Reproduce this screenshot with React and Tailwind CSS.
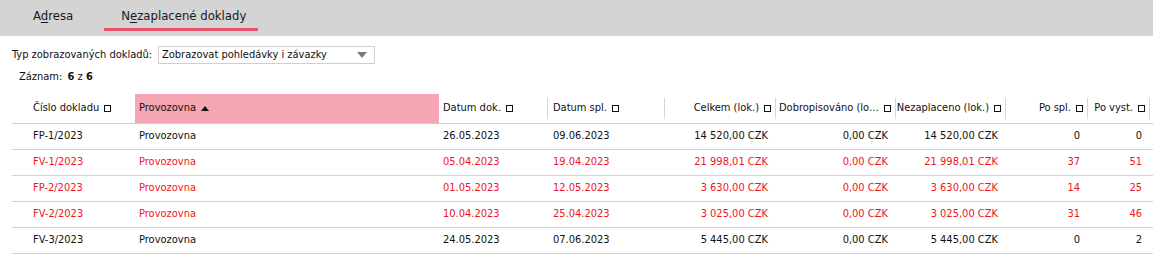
import React from "react";

const font = { fontFamily: '"DejaVu Sans Condensed", Tahoma, "Liberation Sans", sans-serif' };

const cols = [
  { label: "Číslo dokladu", w: 123, align: "left", pl: "pl-[21px]" },
  { label: "Provozovna", w: 304, align: "left", pl: "pl-[4px]", sorted: true },
  { label: "Datum dok.", w: 109, align: "left", pl: "pl-[4px]" },
  { label: "Datum spl.", w: 117, align: "left", pl: "pl-[5px]" },
  { label: "Celkem (lok.)", w: 111, align: "right" },
  { label: "Dobropisováno (lo…", w: 120, align: "right" },
  { label: "Nezaplaceno (lok.)", w: 110, align: "right" },
  { label: "Po spl.", w: 82, align: "right" },
  { label: "Po vyst.", w: 62, align: "right" },
];

const rows = [
  { red: false, d: ["FP-1/2023", "Provozovna", "26.05.2023", "09.06.2023", "14 520,00 CZK", "0,00 CZK", "14 520,00 CZK", "0", "0"] },
  { red: true, d: ["FV-1/2023", "Provozovna", "05.04.2023", "19.04.2023", "21 998,01 CZK", "0,00 CZK", "21 998,01 CZK", "37", "51"] },
  { red: true, d: ["FP-2/2023", "Provozovna", "01.05.2023", "12.05.2023", "3 630,00 CZK", "0,00 CZK", "3 630,00 CZK", "14", "25"] },
  { red: true, d: ["FV-2/2023", "Provozovna", "10.04.2023", "25.04.2023", "3 025,00 CZK", "0,00 CZK", "3 025,00 CZK", "31", "46"] },
  { red: false, d: ["FV-3/2023", "Provozovna", "24.05.2023", "07.06.2023", "5 445,00 CZK", "0,00 CZK", "5 445,00 CZK", "0", "2"] },
];

function Sq() {
  return <span className="inline-block w-[7px] h-[7px] border border-[#111] ml-[5px] mb-[1px] shrink-0" />;
}

export default function App() {
  return (
    <div className="w-[1153px] h-[254px] bg-white text-[11px] text-[#111] overflow-hidden" style={font}>
      {/* Tabs */}
      <div className="h-[36px] bg-[#d4d4d4] flex items-start">
        <div className="ml-[33px] mt-[8px] text-[13px] leading-[16px] text-[#1a1a1a]">
          A<span className="underline underline-offset-2">d</span>resa
        </div>
        <div className="ml-[31px] flex flex-col">
          <div className="mt-[8px] pl-[17px] pr-[12px] text-[13px] leading-[16px] text-[#1a1a1a]">
            N<span className="underline underline-offset-2">e</span>zaplacené doklady
          </div>
          <div className="mt-[4px] h-[3px] bg-[#e8506c]" />
        </div>
      </div>

      {/* Filter */}
      <div className="flex items-center mt-[10px] h-[18px]">
        <span className="ml-[12px] w-[146px]">Typ zobrazovaných dokladů:</span>
        <div className="w-[217px] h-[18px] border border-[#cfcfcf] flex items-center justify-between pl-[3px] pr-[7px]">
          <span>Zobrazovat pohledávky i závazky</span>
          <span className="w-0 h-0 border-l-[5px] border-r-[5px] border-t-[6px] border-l-transparent border-r-transparent border-t-[#7a7a7a]" />
        </div>
      </div>

      <div className="ml-[19px] mt-[6px] h-[14px] leading-[14px]">
        Záznam: <b className="ml-[2px]">6</b> z <b>6</b>
      </div>

      {/* Table */}
      <div className="ml-[12px] mt-[10px]">
        <div className="flex h-[30px] border-b border-[#cdcdcd]">
          {cols.map((c, i) => (
            <div
              key={i}
              style={{ width: c.w }}
              className={
                "flex items-center h-full " +
                (c.sorted ? "bg-[#f6a5b3] " : "") +
                (c.align === "right" ? "justify-end pr-[3px] " : (c.pl || "") + " ")
              }
            >
              <div className="flex items-center">
                <span className="whitespace-nowrap">{c.label}</span>
                {c.sorted ? (
                  <span className="ml-[5px] mb-[1px] w-0 h-0 border-l-[4px] border-r-[4px] border-b-[5px] border-l-transparent border-r-transparent border-b-[#111]" />
                ) : (
                  <Sq />
                )}
              </div>
              {i >= 2 && (
                <div className={"h-[21px] w-px bg-[#d6d6d6] " + (c.align === "right" ? "ml-[4px] -mr-[3px]" : "ml-auto")} />
              )}
            </div>
          ))}
        </div>
        {rows.map((r, ri) => (
          <div key={ri} className={"flex h-[26px] border-b border-[#d2d2d2] " + (r.red ? "text-[#f0141e]" : "")}>
            {r.d.map((v, i) => {
              const c = cols[i];
              return (
                <div
                  key={i}
                  style={{ width: c.w }}
                  className={
                    "flex items-center whitespace-nowrap " +
                    (c.align === "right" ? "justify-end pr-[8px]" : c.pl)
                  }
                >
                  {v}
                </div>
              );
            })}
          </div>
        ))}
      </div>
    </div>
  );
}
